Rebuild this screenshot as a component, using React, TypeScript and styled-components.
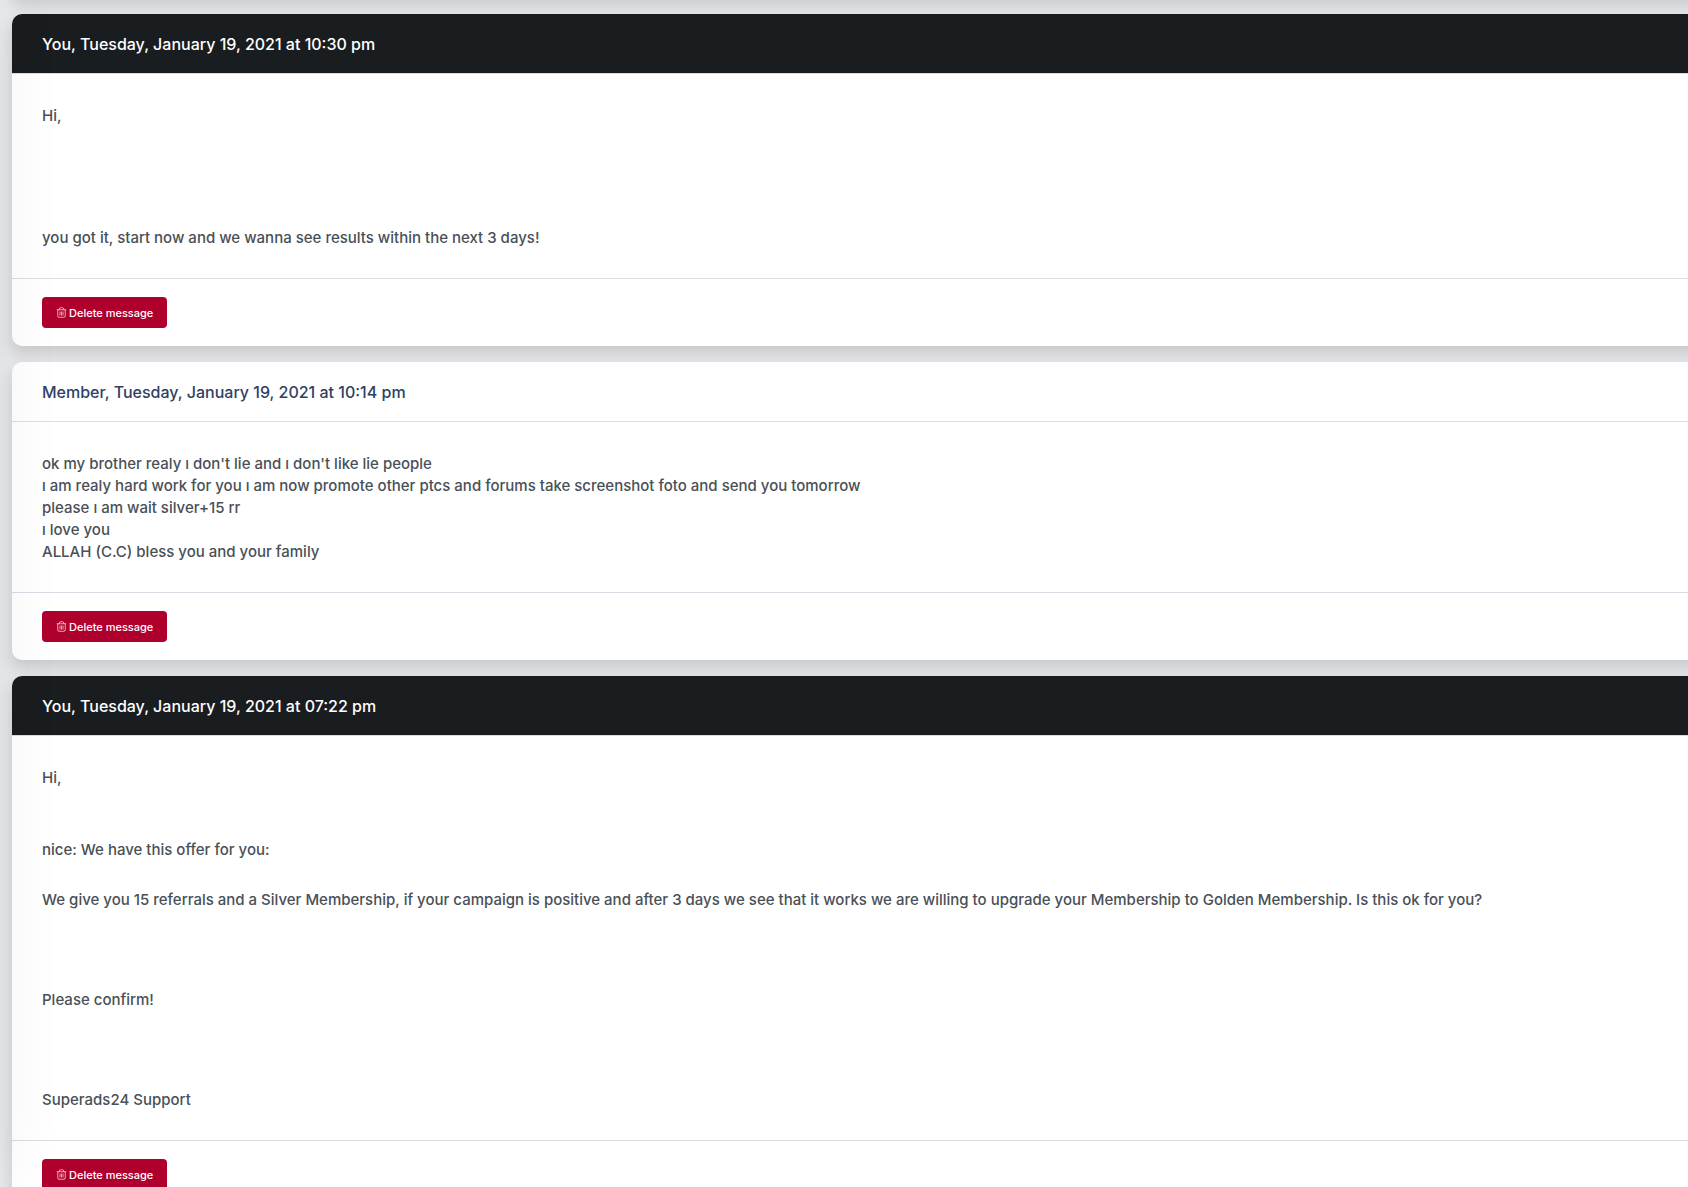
import React from "react";
import styled, { createGlobalStyle } from "styled-components";

const GlobalStyle = createGlobalStyle`
  *, *::before, *::after { box-sizing: border-box; }
  body {
    margin: 0;
    background: #e9ebee;
    color: #495057;
    font-family: Inter, "Liberation Sans", sans-serif;
    font-size: 15px;
    font-weight: 500;
    line-height: 22px;
    overflow-x: hidden;
  }
`;

const SidebarEdge = styled.aside`
  position: fixed;
  top: 0;
  bottom: 0;
  left: -280px;
  width: 280px;
  z-index: 2;
  pointer-events: none;
  box-shadow: 7px 0 60px rgba(0, 0, 0, 0.05);
`;

const Thread = styled.main`
  display: flex;
  flex-direction: column;
  gap: 16px;
  padding-left: 12px;
  height: 100vh;
  overflow: hidden;
`;

/* Cards bleed past the right edge so their shadow stays even there. */
const Card = styled.article`
  flex: none;
  margin-right: -30px;
  background: #fff;
  border-radius: 10px;
  box-shadow: 0 8px 16px rgba(0, 0, 0, 0.15);
`;

/* Tail of the newer message, scrolled above the viewport. */
const ScrolledCard = styled(Card)`
  height: 60px;
  margin-top: -62px;
`;

const CardHeader = styled.header<{ $own: boolean }>`
  padding: 19px 30px 18px;
  border-bottom: 1px solid #d9dce4;
  border-radius: 10px 10px 0 0;
  background: ${(p) => (p.$own ? "#191d20" : "transparent")};
  background-clip: padding-box;
  color: ${(p) => (p.$own ? "#fff" : "#2f4064")};
`;

const Title = styled.h2`
  margin: 0;
  font-size: 16px;
  font-weight: 500;
  line-height: 22px;
`;

const CardBody = styled.div`
  display: flex;
  flex-direction: column;
  gap: 28px;
  padding: 31px 30px 29px;
`;

const Paragraph = styled.p`
  margin: 0;
  min-height: 22px;
  white-space: pre-line;
`;

const CardFooter = styled.footer`
  display: flex;
  padding: 18px 30px;
  border-top: 1px solid #d9dce4;
`;

const DeleteButton = styled.button`
  display: flex;
  align-items: center;
  gap: 2px;
  height: 31px;
  padding: 0 14px;
  border: 0;
  border-radius: 4px;
  background: #af002d;
  color: #fff;
  font: inherit;
  font-size: 11px;
  cursor: pointer;
`;

const TrashIcon = () => (
  <svg width="11" height="11" viewBox="0 0 22 22" fill="none" stroke="currentColor" strokeWidth="1.3" aria-hidden="true">
    <path d="M1.5 5.5h19" />
    <path d="M6.5 5.5V4a2.5 2.5 0 0 1 2.500-2.500h4A2.500 2.500 0 0 1 15.500 4v1.500" />
    <path d="M3.500 5.500v12.500a2.500 2.500 0 0 0 2.500 2.500h10a2.500 2.500 0 0 0 2.500-2.500V5.500" />
    <path d="M8 9v8M11 9v8M14 9v8" />
  </svg>
);

type Message = { own: boolean; title: string; paragraphs: string[] };

const messages: Message[] = [
  {
    own: true,
    title: "You, Tuesday, January 19, 2021 at 10:30 pm",
    paragraphs: ["Hi,\n\u00a0", "", "you got it, start now and we wanna see results within the next 3 days!"],
  },
  {
    own: false,
    title: "Member, Tuesday, January 19, 2021 at 10:14 pm",
    paragraphs: [
      "ok my brother realy ı don't lie and ı don't like lie people\nı am realy hard work for you ı am now promote other ptcs and forums take screenshot foto and send you tomorrow\nplease ı am wait silver+15 rr\nı love you\nALLAH (C.C) bless you and your family",
    ],
  },
  {
    own: true,
    title: "You, Tuesday, January 19, 2021 at 07:22 pm",
    paragraphs: [
      "Hi,\n\u00a0",
      "nice: We have this offer for you:",
      "We give you 15 referrals and a Silver Membership, if your campaign is positive and after 3 days we see that it works we are willing to upgrade your Membership to Golden Membership. Is this ok for you?",
      "",
      "Please confirm!",
      "",
      "Superads24 Support",
    ],
  },
];

export default function App() {
  return (
    <>
      <GlobalStyle />
      <SidebarEdge aria-hidden="true" />
      <Thread>
        <ScrolledCard aria-hidden="true" />
        {messages.map((message) => (
          <Card key={message.title}>
            <CardHeader $own={message.own}>
              <Title>{message.title}</Title>
            </CardHeader>
            <CardBody>
              {message.paragraphs.map((text, i) => (
                <Paragraph key={i}>{text}</Paragraph>
              ))}
            </CardBody>
            <CardFooter>
              <DeleteButton type="button">
                <TrashIcon />
                Delete message
              </DeleteButton>
            </CardFooter>
          </Card>
        ))}
      </Thread>
    </>
  );
}
